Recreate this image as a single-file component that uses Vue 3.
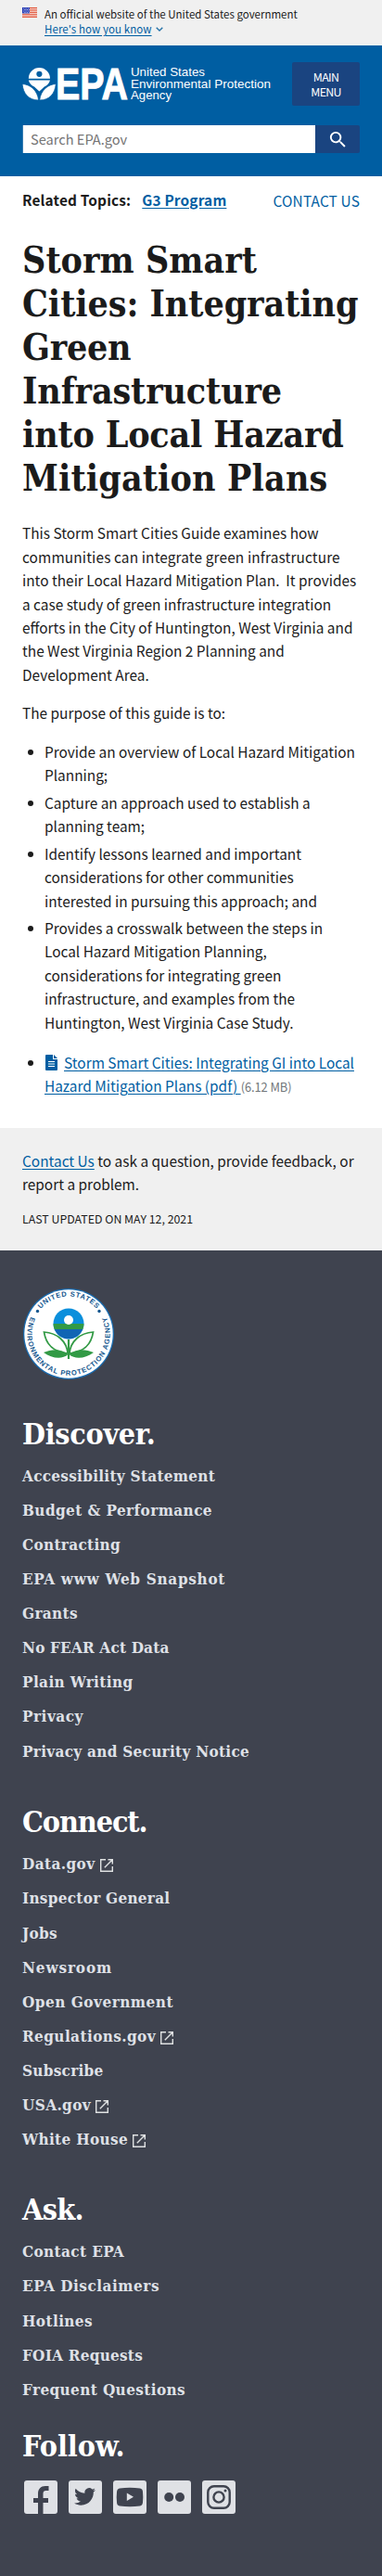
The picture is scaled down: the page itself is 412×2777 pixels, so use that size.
<script setup>
const headline = [
  ['Storm Smart', 0.03], ['Cities: Integrating', -0.07], ['Green', -0.25],
  ['Infrastructure', -0.15], ['into Local Hazard', -0.2], ['Mitigation Plans', 0.13],
].map(([text, tracking]) => ({ text, tracking }))

const link = ([label, tracking, external = false]) => ({ label, tracking, external })
const groups = [
  {
    title: 'Discover.', tracking: -0.29, name: 'discover',
    links: [
      ['Accessibility Statement', 0.28], ['Budget & Performance', 0.42], ['Contracting', 0.31],
      ['EPA www Web Snapshot', 0.69], ['Grants', 0.36], ['No FEAR Act Data', 0.18],
      ['Plain Writing', 0.39], ['Privacy', 0.52], ['Privacy and Security Notice', 0.29],
    ].map(link),
  },
  {
    title: 'Connect.', tracking: -1.08, name: 'connect',
    links: [
      ['Data.gov', 0.41, true], ['Inspector General', 0.28], ['Jobs', 0.32], ['Newsroom', 0.86],
      ['Open Government', 0.51], ['Regulations.gov', 0.41, true], ['Subscribe', 0.27],
      ['USA.gov', 0.38, true], ['White House', 0.33, true],
    ].map(link),
  },
  {
    title: 'Ask.', tracking: -0.63, name: 'ask',
    links: [
      ['Contact EPA', 0.37], ['EPA Disclaimers', 0.52], ['Hotlines', 0.4],
      ['FOIA Requests', 0.25], ['Frequent Questions', 0.39],
    ].map(link),
  },
]
const spacing = (v) => ({ letterSpacing: v + 'px' })
</script>

<template>
  <div class="page">
    <section class="banner">
      <svg class="flag" viewBox="0 0 16 11" aria-hidden="true">
        <rect width="16" height="11" fill="#fff" />
        <path d="M0 .5h16M0 2.2h16M0 3.9h16M0 5.6h16M0 7.3h16M0 9h16M0 10.6h16" stroke="#db3e1f" stroke-width=".9" />
        <rect width="8" height="6.4" fill="#1e33b1" />
        <path d="M1 1.2h7M1.8 2.6h6M1 4h7M1.8 5.4h6" stroke="#fff" stroke-width=".8" stroke-dasharray=".8 .9" />
      </svg>
      <div class="banner-text">
        <p>An official website of the United States government</p>
        <a href="#" class="know"><span>Here's how you know</span>
          <svg viewBox="0 0 8 5" width="8" height="5"><path d="M.7.7 4 3.9 7.3.7" fill="none" stroke="#2672a8" stroke-width="1.4" /></svg>
        </a>
      </div>
    </section>

    <header class="header">
      <div class="header-top">
        <svg class="logo" viewBox="0 0 270 40" width="270" height="40" aria-label="EPA">
          <g fill="#fff">
            <path d="M6.800 12.700a11.600 11.600 0 0 1 23.200 0z" />
            <circle cx="18.400" cy="7.800" r="3.100" fill="#005ea2" />
            <path d="M6.800 14.400h23.200c-1 3.800-3.600 6-6.200 7l-5.400 5-5.400-5c-2.600-1-5.200-3.200-6.200-7z" />
            <path d="M0 18.500c8.500.3 16.600 7 17.600 17.500C7 36 1 29 0 18.500z" stroke="#005ea2" stroke-width=".8" />
            <path d="M36.300 18.500c-8.500.3-16.600 7-17.600 17.500 10.600 0 16.600-7 17.600-17.500z" stroke="#005ea2" stroke-width=".8" />
          </g>
          <text class="epa" x="36" y="35.300" textLength="78" lengthAdjust="spacingAndGlyphs">EPA</text>
          <g class="agency">
            <text x="117" y="10" textLength="80" lengthAdjust="spacingAndGlyphs">United States</text>
            <text x="117" y="22.700" textLength="151" lengthAdjust="spacingAndGlyphs">Environmental Protection</text>
            <text x="117" y="35.300" textLength="44" lengthAdjust="spacingAndGlyphs">Agency</text>
          </g>
        </svg>
        <button class="menu">MAIN<br>MENU</button>
      </div>
      <div class="search">
        <div class="field">Search EPA.gov</div>
        <button class="go" aria-label="Search">
          <svg viewBox="0 0 24 24" width="23" height="23"><path fill="#fff" d="M15.500 14h-.79l-.28-.27A6.470 6.470 0 0 0 16 9.500 6.500 6.500 0 1 0 9.500 16c1.610 0 3.090-.59 4.230-1.570l.27.28v.79l5 4.990L20.490 19l-4.990-5zm-6 0C7.010 14 5 11.990 5 9.500S7.010 5 9.500 5 14 7.010 14 9.500 11.990 14 9.500 14z" /></svg>
        </button>
      </div>
    </header>

    <main class="main">
      <div class="topics">
        <p class="related">Related Topics:<a href="#">G3 Program</a></p>
        <a href="#" class="contact">CONTACT US</a>
      </div>
      <h1><template v-for="(h, i) in headline" :key="h.text"><br v-if="i"><span :style="spacing(h.tracking)">{{ h.text }}</span></template></h1>
      <p>This Storm Smart Cities Guide examines how<br><span class="loose">communities can integrate green infrastructure</span><br>into their Local Hazard Mitigation Plan.&nbsp; It provides<br>a case study of green infrastructure integration<br>efforts in the City of Huntington, West Virginia and<br>the West Virginia Region 2 Planning and<br>Development Area.</p>
      <p>The purpose of this guide is to:</p>
      <ul>
        <li>Provide an overview of Local Hazard Mitigation<br>Planning;</li>
        <li>Capture an approach used to establish a<br>planning team;</li>
        <li>Identify lessons learned and important<br>considerations for other communities<br>interested in pursuing this approach; and</li>
        <li>Provides a crosswalk between the steps in<br>Local Hazard Mitigation Planning,<br>considerations for integrating green<br>infrastructure, and examples from the<br>Huntington, West Virginia Case Study.</li>
      </ul>
      <ul>
        <li><svg class="doc" viewBox="0 0 13 17" width="13" height="17"><path fill="#005ea2" d="M1 0h7v5h5v11a1 1 0 0 1-1 1H1a1 1 0 0 1-1-1V1a1 1 0 0 1 1-1zM9 0l4 4H9z" /><path d="M3 7.500h7M3 10h7M3 12.500h7" stroke="#fff" stroke-width="1" /></svg><a href="#">Storm Smart Cities: Integrating GI into Local<br>Hazard Mitigation Plans (pdf) </a><span class="size">(6.12 MB)</span></li>
      </ul>
    </main>

    <section class="feedback">
      <p><a href="#">Contact Us</a> to ask a question, provide feedback, or<br>report a problem.</p>
      <p class="updated">LAST UPDATED ON MAY 12, 2021</p>
    </section>

    <footer class="footer">
      <svg class="seal" viewBox="0 0 100 100" width="100" height="100" aria-label="EPA seal">
        <defs>
          <path id="seal-top" d="M9.500 50a40.500 40.500 0 0 1 81 0" />
          <path id="seal-bottom" d="M12.500 26A44.600 44.600 0 1 0 87.500 26" />
        </defs>
        <circle cx="50" cy="50" r="49" fill="#1a6cb0" />
        <circle cx="50" cy="50" r="47.700" fill="#fff" />
        <g class="ring">
          <text><textPath href="#seal-top" startOffset="50%" text-anchor="middle" textLength="68">UNITED STATES</textPath></text>
          <text><textPath href="#seal-bottom" startOffset="50%" text-anchor="middle" textLength="178">ENVIRONMENTAL PROTECTION AGENCY</textPath></text>
        </g>
        <circle cx="16.500" cy="25.500" r="1.700" fill="#14568e" />
        <circle cx="83" cy="25.500" r="1.700" fill="#14568e" />
        <circle cx="50" cy="39" r="16.500" fill="#0b8fdc" />
        <path d="M33.500 39h33a16.500 16.500 0 0 1-1.200 6H34.700a16.500 16.500 0 0 1-1.200-6z" fill="#329a45" />
        <path d="M34.700 45h30.600a16.500 16.500 0 0 1-30.600 0z" fill="#1065b4" />
        <circle cx="50" cy="35" r="5" fill="#fff" />
        <path d="M50 56v21" stroke="#329a45" stroke-width="2.200" />
        <path d="M49 71C48 58 38 49 23.500 48c2 13 9 21 25.500 23zM51 71c1-13 11-22 25.500-23-2 13-9 21-25.500 23z" fill="#fff" stroke="#329a45" stroke-width="1.700" />
        <path d="M49.500 72C40 65 31 67 23 70c9 6.500 20 8 26.500 2zM50.500 72c9.500-7 18.500-5 26.500-2-9 6.500-20 8-26.500 2z" fill="#329a45" />
      </svg>
      <nav v-for="g in groups" :key="g.title" class="group" :class="g.name">
        <h2 :style="spacing(g.tracking)">{{ g.title }}</h2>
        <a v-for="l in g.links" :key="l.label" href="#" class="flink"><span :style="spacing(l.tracking)">{{ l.label }}</span><svg v-if="l.external" viewBox="0 0 14 14" width="14" height="14"><path d="M6 .7H.7v12.600h12.600V8M8.500.7h4.800v4.800M13 1 4.800 9.200" fill="none" stroke="#dfe1e2" stroke-width="1.400" /></svg></a>
      </nav>
      <div class="follow">
        <h2>Follow.</h2>
        <div class="social">
          <svg viewBox="0 0 36 36"><path d="M15 36V24h-5v-5h5v-4.500C15 9 18 6 23 6h3.500v5H23.500c-2 0-3 1-3 3v5H26v5h-5.500v12z" /></svg>
          <svg viewBox="0 0 36 36"><path d="M29 10.300c-.8.400-1.700.6-2.700.7 1-.6 1.700-1.500 2-2.600-.9.500-1.900.9-2.900 1.100a4.800 4.800 0 0 0-8 4.300c-4-.2-7.500-2.100-9.800-5-1.300 2.200-.6 4.900 1.500 6.300-.8 0-1.500-.2-2.100-.6 0 2.300 1.600 4.200 3.700 4.700-.7.200-1.400.2-2.100.1.600 1.800 2.300 3.200 4.400 3.200a9.400 9.400 0 0 1-6.900 2c2.100 1.300 4.600 2.200 7.200 2.200 9 0 13.800-7.500 13.500-14.100.9-.6 1.700-1.400 2.200-2.300z" /></svg>
          <svg viewBox="0 0 36 36"><path d="M7 8.500Q18 7 29 8.500q3 .5 3 4Q32.600 18 32 23.500q-.2 3.500-3 4Q18 28.800 7 27.500q-3-.5-3-4Q3.400 18 4 12.500q.2-3.500 3-4z" /><path d="m14.800 13.500 7.200 4.300-7.200 4.300z" class="light" /></svg>
          <svg viewBox="0 0 36 36"><circle cx="12.200" cy="18" r="5" /><circle cx="24" cy="18" r="5" /></svg>
          <svg viewBox="0 0 36 36"><rect x="6.300" y="6.300" width="23.400" height="23.400" rx="6.500" class="line" /><circle cx="18" cy="18" r="5.600" class="line" /><circle cx="25" cy="11" r="1.500" /></svg>
        </div>
      </div>
    </footer>
  </div>
</template>

<style>
html, body { margin: 0; background: #fff; }
</style>

<style scoped>
.page {
  width: 412px;
  height: 2777px;
  overflow: hidden;
  display: flex;
  flex-direction: column;
  background: #fff;
  color: #1b1b1b;
  font: 15.4px/25.44px "Noto Sans CJK SC", "Noto Sans", sans-serif;
}
.page > * { flex-shrink: 0; box-sizing: border-box; }
p, h1, h2, ul { margin: 0; }
a { color: #005ea2; text-underline-offset: 2px; }
.banner {
  height: 49px;
  display: flex;
  gap: 8px;
  padding: 7px 24px 0;
  background: #f0f0f0;
  font-size: 11.5px;
  line-height: 16px;
  white-space: nowrap;
}
.flag { width: 16px; height: 11px; margin-top: 1px; }
.know { display: flex; align-items: center; gap: 4px; text-decoration: none; }
.know span { text-decoration: underline; letter-spacing: 0.08px; }
.header {
  height: 141px;
  padding: 18px 24px 0;
  background: #005ea2;
}
.header-top { display: flex; justify-content: space-between; height: 48px; }
.logo { margin-top: 5px; overflow: visible; }
.epa { font: bold 48px "Liberation Sans", Arial, sans-serif; fill: #fff; stroke: #fff; stroke-width: 1; }
.agency { font: 12.2px "Liberation Sans", Arial, sans-serif; fill: #fff; }
button { border: 0; padding: 0; font: inherit; color: #fff; background: #1a4480; }
.menu { width: 73px; height: 47px; font-size: 12.4px; line-height: 16px; letter-spacing: -0.7px; border-radius: 2px; }
.search { display: flex; margin-top: 20px; height: 30px; }
.field {
  box-sizing: border-box;
  width: 316px;
  padding-left: 8px;
  background: #fff;
  border-left: 1px solid #3a7fb4;
  color: #757575;
  font-size: 14.6px;
  line-height: 30px;
}
.go { width: 48px; height: 30px; display: flex; justify-content: center; align-items: center; border-radius: 0 2px 2px 0; }
.main { height: 1026px; padding: 12.6px 24px 0; }
.topics { display: flex; justify-content: space-between; height: 27px; }
.related { font-weight: 700; letter-spacing: 0.17px; }
.related a { margin-left: 12px; }
.contact { text-decoration: none; margin-top: 1.5px; letter-spacing: 0.16px; }
h1, h2, .flink { font-family: "DejaVu Serif Condensed", "DejaVu Serif", serif; font-stretch: condensed; font-weight: 700; }
h1 { margin: 27.2px 0 23.5px; white-space: nowrap; font-size: 39px; line-height: 47px; }
.main p { margin-bottom: 15.5px; white-space: nowrap; }
.main .related { margin: 0; }
.loose { letter-spacing: 0.13px; }
ul { list-style: none; padding-left: 24px; margin-bottom: 17.800px; white-space: nowrap; }
.main p + ul { margin-top: 16.600px; }
li { margin-bottom: 4px; position: relative; }
li::before { content: ""; position: absolute; left: -18px; top: 10.5px; width: 6px; height: 6px; border-radius: 50%; background: #1b1b1b; }
.doc { margin: 0 7px 0 1px; vertical-align: -2px; }
.size { font-size: 12.9px; line-height: 1; color: #71767a; letter-spacing: -0.08px; }
.feedback { height: 132px; padding: 23px 24px 0; background: #f0f0f0; white-space: nowrap; }
.updated { margin-top: 12px; font-size: 12.35px; }
.footer { height: 1429px; padding: 40px 24px 0; background: #3f434f; }
.seal { display: block; }
.group h2, .follow h2 { color: #fff; font-size: 32px; line-height: 36px; }
.group h2 { margin-bottom: 9.8px; }
.group { height: 418px; }
.group.discover { margin-top: 40px; height: 417.7px; }
.group.discover h2 { margin-bottom: 9px; }
.group.ask { height: 255px; }
.flink { display: flex; align-items: center; gap: 5px; height: 37.1px; font-size: 17px; color: #dfe1e7; text-decoration: none; white-space: nowrap; }
.flink svg { margin-top: 2px; }
.social { display: flex; gap: 12px; padding: 19.600px 2px 0; }
.social svg { width: 36px; height: 36px; border-radius: 3px; background: #dfe1e5; fill: #3f434f; }
.social .light { fill: #dfe1e5; }
.social .line { fill: none; stroke: #3f434f; stroke-width: 2.4; }
.ring { font: bold 7.600px "Liberation Sans", Arial, sans-serif; fill: #14568e; }
</style>
